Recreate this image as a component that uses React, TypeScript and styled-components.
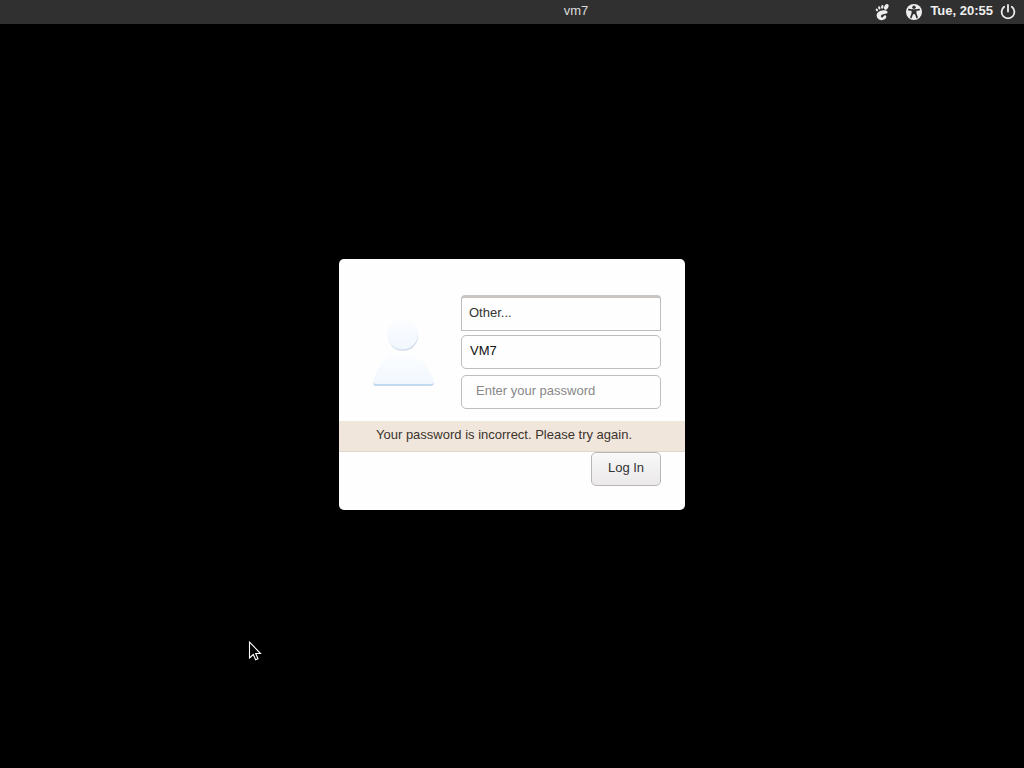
import React from "react";
import styled, { createGlobalStyle } from "styled-components";

const GlobalStyle = createGlobalStyle`
  * { box-sizing: border-box; }
  body {
    margin: 0;
    background: #000;
    font-family: "Liberation Sans", Arial, sans-serif;
    font-size: 13px;
    line-height: 16px;
  }
  button, input { font: inherit; }
`;

const Screen = styled.div`
  position: relative;
  min-height: 100vh;
  display: flex;
  flex-direction: column;
  overflow: hidden;
`;

const TopBar = styled.header`
  display: grid;
  grid-template-columns: 1fr auto 1fr;
  align-items: center;
  height: 24px;
  padding-left: 128px;
  background: #303030;
  color: #dcdcdc;
`;

const HostName = styled.h1`
  grid-column: 2;
  margin: 0;
  padding-bottom: 2px;
  font-size: 13px;
  line-height: 16px;
  font-weight: normal;
`;

const Tray = styled.div`
  display: flex;
  align-items: center;
  justify-content: flex-end;
  padding-right: 8px;
`;

const TrayButton = styled.button<{ $gap: number }>`
  display: flex;
  margin: 0 ${(p) => p.$gap}px 0 0;
  padding: 0;
  border: 0;
  background: none;
  color: #eee;
`;

const Clock = styled.time`
  padding: 0 7px 2px 0;
  font-weight: bold;
  color: #eee;
  white-space: nowrap;
`;

const Stage = styled.main`
  flex: 1;
  display: flex;
  align-items: center;
  justify-content: center;
  padding-bottom: 23px;
`;

const Card = styled.form`
  width: 346px;
  padding: 36px 0 24px;
  border-radius: 5px;
  background: #fefefe;
`;

const Account = styled.div`
  display: flex;
  align-items: center;
  justify-content: space-between;
  padding: 0 24px 12px 32px;
`;

const Fields = styled.div`
  display: flex;
  flex-direction: column;
  width: 200px;
`;

const UserButton = styled.button`
  height: 36px;
  margin-bottom: 4px;
  padding: 0 7px 2px;
  border: 1px solid #bdbdbd;
  border-top: 3px solid #c9c6c2;
  border-radius: 4px 4px 0 0;
  background: #fefefe;
  color: #333;
  text-align: left;
`;

const TextField = styled.input<{ $gap: number; $indent: number }>`
  width: 100%;
  height: 34px;
  margin: 0 0 ${(p) => p.$gap}px;
  padding: 0 8px 4px ${(p) => p.$indent}px;
  border: 1px solid #bdbdbd;
  border-radius: 5px;
  background: #fefefe;
  color: #111;
  outline: none;
  &::placeholder { color: #888; opacity: 1; }
`;

const Message = styled.p`
  margin: 0;
  padding: 6px 37px 8px;
  border-bottom: 1px solid #dfd6cc;
  background: #f0e6dc;
  color: #3c332c;
  white-space: nowrap;
`;

const Actions = styled.div`
  display: flex;
  justify-content: flex-end;
  padding: 0 24px;
`;

const LoginButton = styled.button`
  width: 70px;
  height: 34px;
  padding: 0 0 2px;
  border: 1px solid #b9b6b6;
  border-radius: 5px;
  background: linear-gradient(#f8f8f8, #ebe9e9);
  color: #333;
`;

const Pointer = styled.svg`
  position: absolute;
  left: 248px;
  top: 640px;
  pointer-events: none;
`;

const FootIcon = () => (
  <svg width="16" height="18" viewBox="0 0 16 18" fill="currentColor" aria-hidden="true">
    <ellipse cx="12.3" cy="3.9" rx="2" ry="3" transform="rotate(28 12.3 3.9)" />
    <ellipse cx="8.3" cy="3.8" rx="1.2" ry="1.9" transform="rotate(5 8.3 3.8)" />
    <ellipse cx="5.3" cy="4.9" rx="1.1" ry="1.7" transform="rotate(-15 5.3 4.9)" />
    <ellipse cx="2.9" cy="6.9" rx="1" ry="1.5" transform="rotate(-30 2.9 6.9)" />
    <path d="M13.6 9C13.2 6.6 8.6 6.8 5.9 8 3.1 9.3 2.1 11.7 2.9 14c.8 2.4 3.4 3.6 5.7 3.1 2.4-.5 4-2.2 3.7-3.9-.3-1.3-2-1.2-2.6-.2-.5.8-.9 1.7-1.8 1.4-1.3-.4-1.3-1.9-.1-2.6 1.8-.9 6-.7 5.8-2.8z" />
  </svg>
);

const AccessIcon = () => (
  <svg width="16" height="16" viewBox="0 0 16 16" aria-hidden="true">
    <circle cx="8" cy="8" r="8" fill="currentColor" />
    <circle cx="8" cy="3.2" r="1.7" fill="#303030" />
    <path d="M2.9 5.6 6.4 6.2v3.2L5 13.4M13.1 5.6 9.6 6.2v3.2l1.4 4" fill="none" stroke="#303030" strokeWidth="1.7" strokeLinecap="round" />
    <path d="M6 5.4h4v4.8H6z" fill="#303030" />
  </svg>
);

const PowerIcon = () => (
  <svg width="16" height="16" viewBox="0 0 16 16" fill="none" stroke="currentColor" strokeWidth="1.8" strokeLinecap="round" aria-hidden="true">
    <path d="M4.2 2.8A6.4 6.4 0 1 0 11.8 2.8M8 1v6.5" />
  </svg>
);

const Avatar = () => (
  <svg width="64" height="72" viewBox="0 0 64 72" role="img" aria-label="User">
    <defs>
      <linearGradient id="skin" x1="0" y1="0" x2="0" y2="1">
        <stop offset="0" stopColor="#fcfdff" />
        <stop offset="1" stopColor="#f1f7fe" />
      </linearGradient>
    </defs>
    <circle cx="32" cy="19.8" r="15" fill="#c9d8e7" />
    <circle cx="31.5" cy="18.2" r="15.4" fill="url(#skin)" />
    <path d="M3 65C7 51 16 41 24 39q8 5 16 0c8 2 17 12 22 26 1 3 1 5-2 5H5q-4 0-2-5z" fill="#c3d9ee" />
    <path d="M3 63C7 49 16 40 24 38q8 5 16 0c8 2 17 11 22 25 1 3 1 5-2 5H5q-4 0-2-5z" fill="url(#skin)" />
  </svg>
);

export default function App() {
  return (
    <Screen>
      <GlobalStyle />
      <TopBar>
        <HostName>vm7</HostName>
        <Tray>
          <TrayButton type="button" aria-label="Session" $gap={16}><FootIcon /></TrayButton>
          <TrayButton type="button" aria-label="Accessibility" $gap={8}><AccessIcon /></TrayButton>
          <Clock>Tue, 20:55</Clock>
          <TrayButton type="button" aria-label="Power" $gap={0}><PowerIcon /></TrayButton>
        </Tray>
      </TopBar>
      <Stage>
        <Card onSubmit={(e) => e.preventDefault()}>
          <Account>
            <Avatar />
            <Fields>
              <UserButton type="button">Other...</UserButton>
              <TextField type="text" aria-label="Username" defaultValue="VM7" $gap={6} $indent={8} />
              <TextField type="password" aria-label="Password" placeholder="Enter your password" $gap={0} $indent={14} />
            </Fields>
          </Account>
          <Message role="alert">Your password is incorrect. Please try again.</Message>
          <Actions>
            <LoginButton type="submit">Log In</LoginButton>
          </Actions>
        </Card>
      </Stage>
      <Pointer width="14" height="22" viewBox="0 0 14 22" aria-hidden="true">
        <path d="M1.5 2v16l3.8-3.5 2.3 5.2 2.4-1-2.3-5.2h4.8z" fill="#000" stroke="#fff" strokeWidth="1.1" />
      </Pointer>
    </Screen>
  );
}
